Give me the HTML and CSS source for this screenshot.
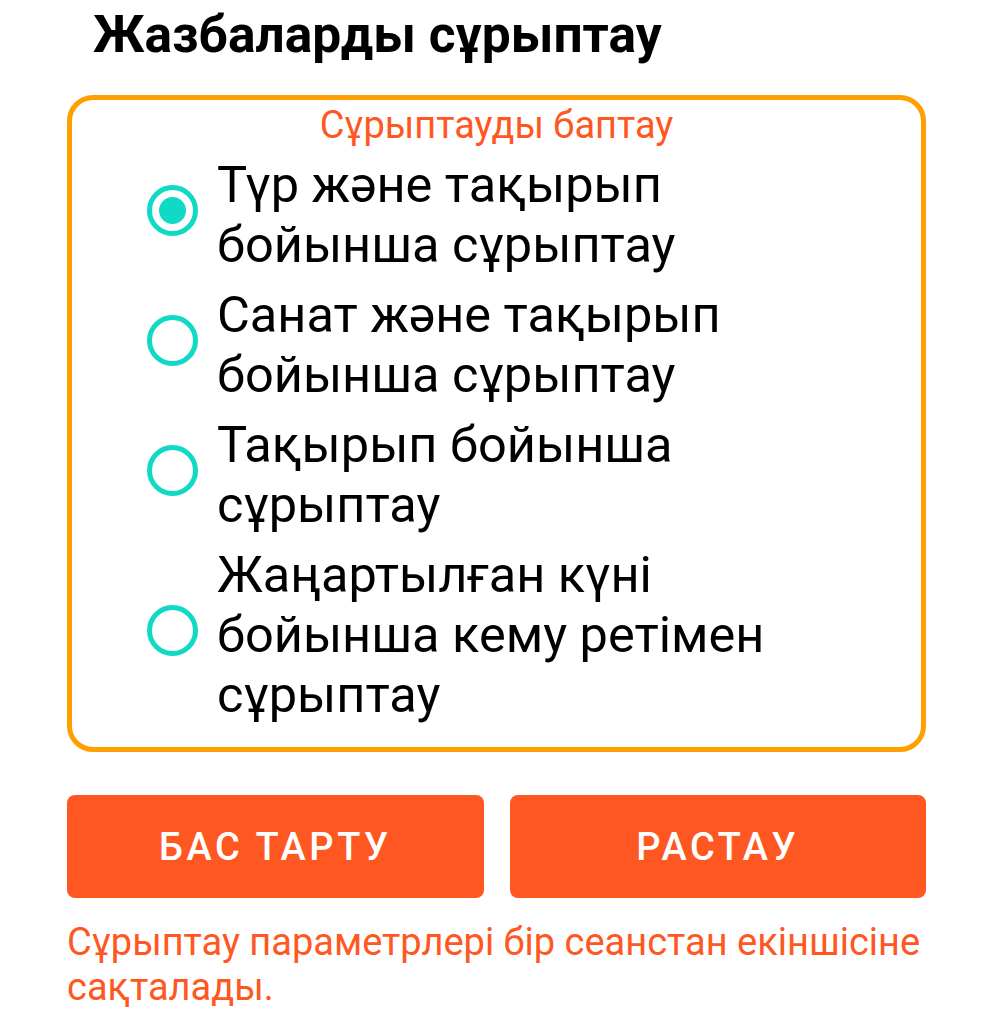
FILE: index.html
```html
<!DOCTYPE html>
<html lang="kk">
<head>
  <meta charset="UTF-8">
  <title>Жазбаларды сұрыптау</title>
  <link rel="stylesheet" href="styles.css">
</head>
<body>

  <div class="dialog">
    <h2 class="title">Жазбаларды сұрыптау</h2>

    <!-- sort options -->
    <fieldset class="sort-box">
      <div class="legend">Сұрыптауды баптау</div>

      <label class="option">
        <span class="radio checked"></span>
        <span class="option-text">Түр және тақырып бойынша сұрыптау</span>
      </label>
      <label class="option">
        <span class="radio"></span>
        <span class="option-text">Санат және тақырып бойынша сұрыптау</span>
      </label>
      <label class="option">
        <span class="radio"></span>
        <span class="option-text">Тақырып бойынша сұрыптау</span>
      </label>
      <label class="option">
        <span class="radio"></span>
        <span class="option-text">Жаңартылған күні бойынша кему ретімен сұрыптау</span>
      </label>
    </fieldset>

    <div class="buttons">
      <button class="btn">БАС ТАРТУ</button>
      <button class="btn">РАСТАУ</button>
    </div>

    <p class="note">Сұрыптау параметрлері бір сеанстан екіншісіне сақталады.</p>
  </div>

</body>
</html>
```

FILE: styles.css
```css
body {
  margin: 0;
  background: #fff;
  font-family: Roboto, "Noto Sans", sans-serif;
  color: #000;
}

.dialog {
  padding: 0 67px 0 67px;
}

.title {
  margin: 0;
  padding: 7px 0 0 26px;
  font-size: 51.5px;
  font-weight: 700;
  line-height: 56px;
}

.sort-box {
  margin: 32px 0 0;
  padding: 3px 0 22px 75px;
  border: 5px solid #ffa000;
  border-radius: 26px;
  min-width: 0;
}

.legend {
  text-align: center;
  margin-left: -75px;
  color: #ff5722;
  font-size: 38px;
  line-height: 44px;
  margin-bottom: 8px;
}

.option {
  display: flex;
  align-items: center;
  margin-bottom: 10px;
}
.option:last-child {
  margin-bottom: 0;
}

.radio {
  flex: none;
  width: 41px;
  height: 41px;
  border: 5px solid #10d9c5;
  border-radius: 50%;
  margin: 0 19px 9px 0;
  position: relative;
}
.radio.checked::after {
  content: "";
  position: absolute;
  left: 7px;
  top: 7px;
  width: 27px;
  height: 27px;
  border-radius: 50%;
  background: #10d9c5;
}

.option-text {
  width: 620px;
  font-size: 50.5px;
  line-height: 60px;
}

.buttons {
  display: flex;
  gap: 26px;
  margin-top: 43px;
}
.btn {
  flex: 1;
  height: 103px;
  border: none;
  border-radius: 8px;
  background: #ff5722;
  color: #fff;
  font-family: Roboto, sans-serif;
  font-size: 38px;
  font-weight: 500;
  letter-spacing: 3.6px;
}

.note {
  margin: 22px 0 0;
  color: #ff5722;
  font-size: 38px;
  line-height: 45px;
}
```
